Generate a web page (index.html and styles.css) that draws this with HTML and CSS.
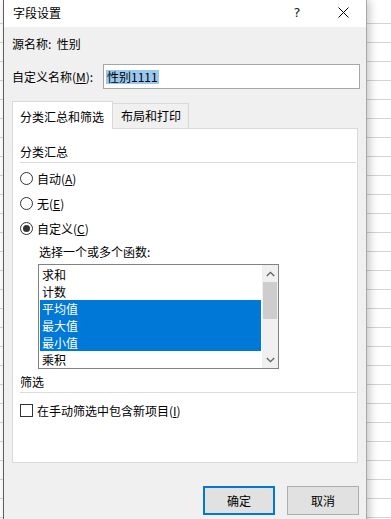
FILE: index.html
```html
<!DOCTYPE html>
<html lang="zh">
<head>
<meta charset="utf-8">
<link rel="stylesheet" href="styles.css">
</head>
<body>
<div class="dialog">
  <div class="titlebar">
    <span class="title">字段设置</span>
    <span class="tb-btn help">?</span>
    <span class="tb-btn close"><svg width="11" height="11" viewBox="0 0 11 11"><path d="M0.5 0.5 L10.5 10.5 M10.5 0.5 L0.5 10.5" stroke="#000" stroke-width="1" fill="none"/></svg></span>
  </div>
  <div class="content">
    <div class="src">源名称:&nbsp;&nbsp;性别</div>
    <div class="namerow">
      <span class="namelabel">自定义名称(<u>M</u>):</span>
      <div class="input"><span class="sel">性别1111</span></div>
    </div>
    <div class="tabs">
      <div class="tab active">分类汇总和筛选</div>
      <div class="tab second-tab">布局和打印</div>
    </div>
    <div class="panel">
      <div class="section first">分类汇总</div>
      <div class="opt r1"><span class="radio"></span><span>自动(<u>A</u>)</span></div>
      <div class="opt"><span class="radio"></span><span>无(<u>E</u>)</span></div>
      <div class="opt"><span class="radio on"></span><span>自定义(<u>C</u>)</span></div>
      <div class="hint">选择一个或多个函数:</div>
      <div class="listbox">
        <div class="items">
          <div class="item">求和</div>
          <div class="item">计数</div>
          <div class="item selected">平均值</div>
          <div class="item selected">最大值</div>
          <div class="item selected">最小值</div>
          <div class="item">乘积</div>
        </div>
        <div class="scrollbar">
          <div class="arrow"><svg width="9" height="6" viewBox="0 0 9 6"><path d="M0.8 5 L4.5 1.3 L8.2 5" stroke="#606060" stroke-width="1.3" fill="none"/></svg></div>
          <div class="thumb"></div>
          <div class="track"></div>
          <div class="arrow"><svg width="9" height="6" viewBox="0 0 9 6"><path d="M0.8 1 L4.5 4.7 L8.2 1" stroke="#606060" stroke-width="1.3" fill="none"/></svg></div>
        </div>
      </div>
      <div class="section second">筛选</div>
      <div class="chkrow"><span class="check"></span><span>在手动筛选中包含新项目(<u>I</u>)</span></div>
    </div>
    <div class="buttons">
      <div class="btn default">确定</div>
      <div class="btn">取消</div>
    </div>
  </div>
</div>
</body>
</html>
```
FILE: styles.css
```css
html, body {
  margin: 0;
  padding: 0;
}
body {
  width: 391px;
  height: 519px;
  overflow: hidden;
  background-color: #fff;
  background-image: repeating-linear-gradient(to bottom, #fff 0px, #fff 18px, #d4d4d4 18px, #d4d4d4 19px);
  background-position: 0 5px;
  font-family: "Noto Sans CJK SC", "Noto Sans", sans-serif;
  font-size: 12px;
  color: #000;
}
.dialog {
  margin-left: 3px;
  width: 362px;
  height: 540px;
  border-left: 1px solid #5f5f5f;
  border-right: 1px solid #a8a8a8;
  background: #f0f0f0;
  box-shadow: 3px 0 8px rgba(0,0,0,0.22);
  display: flex;
  flex-direction: column;
}
.titlebar {
  height: 27px;
  background: #fff;
  display: flex;
  align-items: center;
  padding-bottom: 2px;
  box-sizing: border-box;
}
.title {
  flex: 1;
  padding-left: 9px;
  font-size: 12px;
  line-height: 16px;
}
.tb-btn {
  width: 46px;
  height: 25px;
  display: flex;
  align-items: center;
  justify-content: center;
}
.help {
  font-family: "DejaVu Sans", sans-serif;
  font-size: 13px;
  color: #222;
}
.close svg { display: block; }
.content {
  padding: 0 8px;
  display: flex;
  flex-direction: column;
}
.src {
  margin-top: 7px;
  height: 20px;
  line-height: 20px;
}
.namerow {
  margin-top: 10px;
  display: flex;
  align-items: center;
  margin-right: -2px;
}
.namelabel {
  width: 91px;
  line-height: 20px;
}
.input {
  flex: 1;
  height: 25px;
  box-sizing: border-box;
  border: 1px solid #a6a6a6;
  background: #fff;
  display: flex;
  align-items: center;
  padding-left: 2px;
}
.sel {
  background: #99c9ef;
  line-height: 14px;
  height: 14px;
  display: inline-block;
  padding: 0 1px;
}
.tabs {
  margin-top: 12px;
  height: 27px;
  display: flex;
  align-items: flex-end;
}
.tab {
  height: 25px;
  box-sizing: border-box;
  padding: 0 8px;
  line-height: 24px;
  white-space: nowrap;
  border: 1px solid #d9d9d9;
  border-bottom: none;
  background: #f0f0f0;
}
.tab.active {
  position: relative;
  z-index: 1;
  height: 28px;
  margin-bottom: -1px;
  background: #fff;
  line-height: 29px;
  padding: 0 8px 0 7px;
}
.second-tab {
  margin-left: -1px;
  padding: 0 7px 0 8px;
}
.panel {
  height: 335px;
  box-sizing: border-box;
  border: 1px solid #d9d9d9;
  background: #fff;
  padding-left: 7px;
  display: flex;
  flex-direction: column;
}
.section {
  height: 20px;
  line-height: 20px;
  border-bottom: 1px solid #dcdcdc;
  margin-right: 1px;
}
.section.first { margin-top: 13px; }
.section.second { margin-top: 3px; }
.opt {
  height: 25px;
  display: flex;
  align-items: center;
  gap: 4px;
}
.opt.r1 { margin-top: 3px; }
.radio {
  width: 13px;
  height: 13px;
  box-sizing: border-box;
  border: 1px solid #333;
  border-radius: 50%;
  display: flex;
  align-items: center;
  justify-content: center;
}
.radio.on::after {
  content: "";
  width: 7px;
  height: 7px;
  border-radius: 50%;
  background: #333;
}
.hint {
  height: 20px;
  line-height: 20px;
  margin-top: 1px;
  margin-left: 19px;
}
.listbox {
  margin-top: 2px;
  margin-left: 18px;
  width: 241px;
  height: 105px;
  box-sizing: border-box;
  border: 1px solid #828282;
  display: flex;
}
.items {
  width: 222px;
  padding-top: 1px;
  padding-left: 1px;
}
.item {
  height: 17px;
  line-height: 17px;
  padding-left: 2px;
}
.item.selected {
  background: #0078d7;
  color: #fff;
}
.scrollbar {
  width: 16px;
  margin-left: 1px;
  background: #f0f0f0;
  display: flex;
  flex-direction: column;
}
.arrow {
  height: 17px;
  display: flex;
  align-items: center;
  justify-content: center;
}
.thumb {
  height: 37px;
  margin: 0 1px;
  background: #cdcdcd;
}
.track { flex: 1; }
.chkrow {
  margin-top: 7px;
  height: 20px;
  display: flex;
  align-items: center;
  gap: 4px;
}
.check {
  width: 13px;
  height: 13px;
  box-sizing: border-box;
  border: 1px solid #333;
  background: #fff;
}
.buttons {
  margin-top: 23px;
  margin-right: -1px;
  display: flex;
  justify-content: flex-end;
  gap: 12px;
}
.btn {
  width: 72px;
  height: 29px;
  box-sizing: border-box;
  border: 1px solid #adadad;
  background: #e1e1e1;
  display: flex;
  align-items: center;
  justify-content: center;
}
.btn.default {
  border: 2px solid #0078d7;
}
```
